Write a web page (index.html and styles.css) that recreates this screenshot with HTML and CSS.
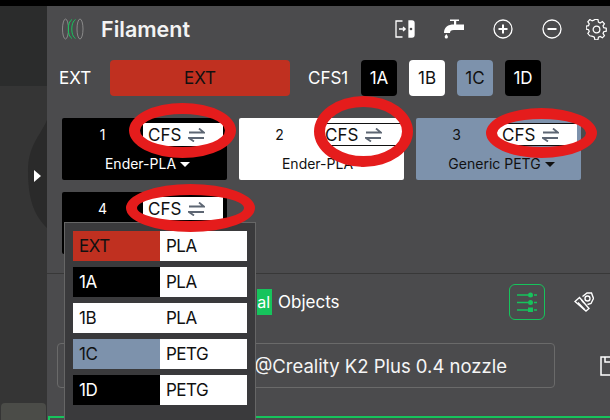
FILE: index.html
```html
<!DOCTYPE html>
<html lang="en">
<head>
<meta charset="utf-8">
<title>Filament</title>
<link rel="stylesheet" href="styles.css">
</head>
<body>
<div class="topbar"></div>
<div class="main">
  <div class="viewport">
    <div class="vp-top"></div>
    <div class="vp-bottom">
      <svg class="vp-curve" width="47" height="150" viewBox="0 0 47 150"><path d="M47 34C40 50 28 60 28 85C28 115 35 130 47 142Z" fill="#2a2a2a"/><path d="M34 84l7 6-7 6Z" fill="#fff"/></svg>
      <div class="vp-block"></div>
    </div>
  </div>
  <div class="panel">
    <header class="title-row">
      <svg class="logo" width="22" height="22" viewBox="0 0 22 22" fill="none" stroke-width="1"><ellipse cx="3.500" cy="11" rx="3" ry="10" stroke="#8a8a8a"/><path d="M10 1.500C5 4 5 18 10 20.500M13.500 1.500C8.500 4 8.500 18 13.500 20.500" stroke="#16c45c"/><ellipse cx="18" cy="11" rx="3" ry="10" stroke="#8a8a8a"/></svg>
      <h1 class="title">Filament</h1>
      <div class="tools">
        <svg class="tool" width="20" height="20" viewBox="0 0 20 20" fill="none" stroke="#fff" stroke-width="1.300"><path d="M7.500 2H1v16h6.500"/><path d="M4 10H10M8 8l2.200 2L8 12"/><path d="M14 2h3a2 2 0 0 1 2 2v12a2 2 0 0 1-2 2h-3Z" fill="#fff"/><circle cx="16" cy="10" r="1.300" fill="#4b4b4d" stroke="none"/></svg>
        <svg class="tool" width="20" height="20" viewBox="0 0 20 20" fill="#fff"><path d="M6 .5h9v1.400h-2.800V5.500H20V11H10C7 11 6 12 6 14H0C0 8 4 5.500 10 5.500V1.900H6Z"/><path d="M2.300 15c1 1.500 1.600 2 1.600 2.900a1.600 1.600 0 0 1-3.200 0c0-.9.600-1.400 1.600-2.900Z"/></svg>
        <svg class="tool" width="20" height="20" viewBox="0 0 20 20" fill="none" stroke="#fff"><circle cx="10" cy="10" r="9" stroke-width="1.300"/><path d="M5.500 10h9M10 5.500v9" stroke-width="2"/></svg>
        <svg class="tool" width="20" height="20" viewBox="0 0 20 20" fill="none" stroke="#fff"><circle cx="10" cy="10" r="9" stroke-width="1.300"/><path d="M5.500 10h9" stroke-width="2"/></svg>
        <svg class="tool gear" width="21" height="21" viewBox="0 0 20 20" fill="none" stroke="#fff" stroke-width="1.200"><circle cx="10" cy="10" r="3.200"/><path d="M8.500 1h3l.5 2.600 1.700.8 2.200-1.400 2 2.200-1.400 2.100.7 1.700 2.500.5v3l-2.500.5-.7 1.700 1.400 2.100-2 2.200-2.200-1.400-1.700.8-.5 2.600h-3l-.5-2.600-1.700-.8L3.600 17 1.600 14.800 3 12.700l-.7-1.700L0 10.500v-3l2.300-.5.700-1.700L1.600 3.200 3.600 1 5.800 2.400l1.700-.8Z" transform="translate(.2 -.5) scale(.97)"/></svg>
      </div>
    </header>
    <div class="slot-row">
      <span class="slot-label">EXT</span>
      <div class="slot-wide red">EXT</div>
      <span class="slot-label cfs-label">CFS1</span>
      <div class="chip black">1A</div>
      <div class="chip white">1B</div>
      <div class="chip blue">1C</div>
      <div class="chip black">1D</div>
    </div>
    <div class="cards">
      <div class="card black"><div class="card-top"><span class="num">1</span><span class="cfs">CFS <svg class="swap" width="17" height="14" viewBox="0 0 17 14" fill="none" stroke="#5d6673" stroke-width="1.800"><path d="M1 4.500h15L11 .5M16 10H1L6 13.500"/></svg></span></div><div class="name">Ender-PLA<i class="caret"></i></div></div>
      <div class="card white"><div class="card-top"><span class="num">2</span><span class="cfs lined">CFS <svg class="swap" width="17" height="14" viewBox="0 0 17 14" fill="none" stroke="#5d6673" stroke-width="1.800"><path d="M1 4.500h15L11 .5M16 10H1L6 13.500"/></svg></span></div><div class="name">Ender-PLA<i class="caret"></i></div></div>
      <div class="card blue"><div class="card-top"><span class="num">3</span><span class="cfs lined">CFS <svg class="swap" width="17" height="14" viewBox="0 0 17 14" fill="none" stroke="#5d6673" stroke-width="1.800"><path d="M1 4.500h15L11 .5M16 10H1L6 13.500"/></svg></span></div><div class="name">Generic PETG<i class="caret"></i></div></div>
      <div class="card black"><div class="card-top"><span class="num">4</span><span class="cfs">CFS <svg class="swap" width="17" height="14" viewBox="0 0 17 14" fill="none" stroke="#5d6673" stroke-width="1.800"><path d="M1 4.500h15L11 .5M16 10H1L6 13.500"/></svg></span></div></div>
    </div>
    <div class="objects-row">
      <span class="tab-green">al</span>
      <span class="objects">Objects</span>
      <div class="obj-tools">
        <span class="sliders"><svg width="20" height="20" viewBox="0 0 20 20" stroke="#16c45c" stroke-width="1.300" fill="#16c45c"><path d="M0 3h11M17 3h3M0 10.500h11M17 10.500h3M0 18h11M17 18h3"/><circle cx="13.500" cy="3" r="2.500" stroke="none"/><circle cx="13.500" cy="10.500" r="2.500" stroke="none"/><rect x="11" y="15.500" width="5" height="5" stroke="none"/></svg></span>
        <svg class="wrench" width="20" height="20" viewBox="0 0 20 20" fill="none" stroke="#fff" stroke-width="1.400"><path d="M8.500 4.500 13 1h4.500l2 5.500-2.500 5-3.500 1"/><circle cx="13.500" cy="6.500" r="2.500"/><path d="M1 9.500 5.500 5.500 15 16.500 12 19Z"/><path d="M4 10.500l6.500 7M7.500 8l2.500 3"/></svg>
      </div>
    </div>
    <div class="preset-row">
      <div class="preset">@Creality K2 Plus 0.4 nozzle</div>
      <svg class="save" width="20" height="20" viewBox="0 0 20 20" fill="none" stroke="#fff" stroke-width="1.500"><path d="M1 1h14l4 4v14H1Z"/><path d="M5 1v5h8V1"/></svg>
    </div>
    <div class="green-line"></div>
  </div>
</div>
<ul class="menu">
  <li class="menu-row"><span class="m-slot red">EXT</span><span class="m-type">PLA</span></li>
  <li class="menu-row"><span class="m-slot black">1A</span><span class="m-type">PLA</span></li>
  <li class="menu-row"><span class="m-slot white">1B</span><span class="m-type">PLA</span></li>
  <li class="menu-row"><span class="m-slot blue">1C</span><span class="m-type">PETG</span></li>
  <li class="menu-row"><span class="m-slot black">1D</span><span class="m-type">PETG</span></li>
</ul>
<i class="ring r1"></i><i class="ring r2"></i><i class="ring r3"></i><i class="ring r4"></i>
</body>
</html>
```
FILE: styles.css
```css
* { box-sizing: border-box; margin: 0; padding: 0; }
html, body { width: 610px; height: 420px; overflow: hidden; background: #4b4b4d; }
body { font-family: Inter, "Noto Sans", sans-serif; color: #fff; position: relative; }
.topbar { height: 6px; background: #000; }
.main { display: flex; height: 414px; }
.viewport { width: 47px; flex: none; display: flex; flex-direction: column; background: #333; }
.vp-top { height: 80px; flex: none; background: #2b2c2c; }
.vp-bottom { flex: 1; background: #353535; display: flex; flex-direction: column; justify-content: space-between; }
.vp-block { height: 17px; width: 45px; margin-left: 1px; background: #4b4c48; border-radius: 4px 4px 0 0; }
.vp-curve { display: block; }
.panel { flex: none; width: 563px; display: flex; flex-direction: column; min-width: 0; overflow: hidden; }
.title-row { height: 45px; margin-bottom: 1px; display: flex; align-items: center; padding-left: 15px; }
.logo { flex: none; }
.title { font-size: 21.500px; font-weight: 600; margin-left: 17px; color: #f3f3f3; }
.tools { margin-left: auto; display: flex; gap: 29px; margin-right: 3px; padding-top: 1px; }
.tool { display: block; }
.gear { margin-left: -5px; }
.slot-row { display: flex; align-items: center; height: 36px; margin-top: 8px; padding-left: 12px; }
.slot-label { font-size: 17px; width: 33px; flex: none; }
.slot-wide { width: 180px; height: 36px; margin-left: 18px; border-radius: 4px; display: flex; align-items: center; justify-content: center; font-size: 17px; }
.cfs-label { margin-left: 18px; margin-right: 13px; width: 40px; }
.chip { width: 36px; height: 36px; border-radius: 4px; margin-right: 12px; display: flex; align-items: center; justify-content: center; font-size: 17px; }
.red { background: #c03020; color: #111; }
.black { background: #000; color: #fff; }
.white { background: #fff; color: #111; }
.blue { background: #7d92ac; color: #111; }
.cards { display: grid; grid-template-columns: repeat(3, 165px); gap: 12px 12px; padding: 22px 0 0 15px; height: 177px; align-content: start; }
.card { height: 62px; border-radius: 2px; display: flex; flex-direction: column; font-size: 14px; }
.card-top { display: flex; height: 33px; align-items: center; }
.num { width: 81px; text-align: center; }
.cfs { width: 80px; height: 23px; background: #fff; color: #111; font-size: 17px; display: flex; align-items: center; gap: 7px; padding-left: 5px; }
.lined { border-top: 1px solid #111; border-bottom: 1px solid #111; }
.name { text-align: center; height: 25px; line-height: 25px; padding-left: 6px; }
.caret { display: inline-block; width: 0; height: 0; margin-left: 4px; border: 5px solid transparent; border-bottom: 0; border-top: 5px solid currentColor; vertical-align: 2px; }
.objects-row { border-top: 1px solid #383838; height: 56px; flex: none; display: flex; align-items: center; padding-left: 210px; }
.tab-green { width: 15px; height: 26px; flex: none; background: #16c45c; text-align: right; padding-right: 2px; line-height: 26px; font-size: 16px; }
.objects { margin-left: 6px; font-size: 17px; }
.obj-tools { margin-left: auto; display: flex; align-items: center; gap: 29px; margin-right: 16px; }
.sliders { width: 36px; height: 36px; border: 1px solid #16c45c; border-radius: 6px; display: flex; align-items: center; justify-content: center; }
.wrench { display: block; }
.preset-row { display: flex; align-items: center; margin-top: 14px; padding-left: 10px; flex: none; }
.preset { width: 498px; height: 45px; flex: none; white-space: nowrap; border: 1px solid #6a6a6a; border-radius: 4px; display: flex; align-items: center; justify-content: flex-end; padding-right: 47px; font-size: 18.500px; color: #f5f5f5; }
.save { margin-left: 45px; flex: none; }
.green-line { margin-top: 28px; margin-left: 1px; flex: 1; border-top: 2px solid #16c45c; border-left: 2px solid #16c45c; }
.menu { list-style: none; position: absolute; left: 64px; top: 222px; width: 192px; height: 198px; background: #3a3a3c; border: 1px solid #666; border-bottom: 0; padding: 8px 8px 0; display: flex; flex-direction: column; gap: 6px; }
.menu-row { display: flex; height: 30px; font-size: 17px; letter-spacing: -.5px; }
.m-slot, .m-type { width: 87px; display: flex; align-items: center; padding-left: 6px; }
.m-type { background: #fff; color: #111; }
.ring { position: absolute; border: 11px solid #e51c1c; border-radius: 50%; }
.r1 { left: 129px; top: 103px; width: 107px; height: 55px; }
.r2 { left: 314px; top: 96px; width: 99px; height: 71px; }
.r3 { left: 486px; top: 108px; width: 111px; height: 50px; }
.r4 { left: 126px; top: 184px; width: 129px; height: 48px; }
```
